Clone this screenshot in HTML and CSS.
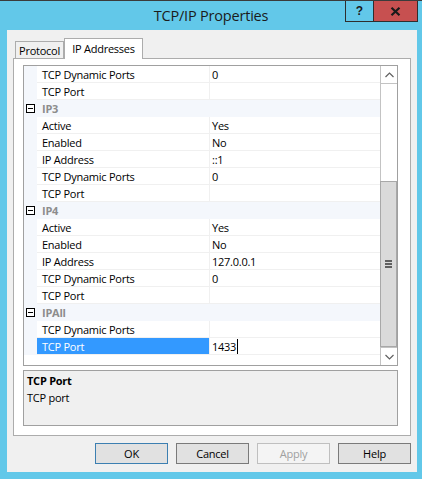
FILE: index.html
```html
<!DOCTYPE html>
<html>
<head>
<meta charset="utf-8">
<link rel="stylesheet" href="styles.css">
</head>
<body>
<div class="window">
  <div class="titlebar">
    <div></div>
    <div class="title">TCP/IP Properties</div>
    <div class="controls">
      <div class="ctl ctl-help">?</div>
      <div class="ctl ctl-close">
        <svg width="11" height="9" viewBox="0 0 11 9"><path d="M1.5 0.8 L9.5 8.2 M9.5 0.8 L1.5 8.2" stroke="#1a1a1a" stroke-width="2.2" fill="none"/></svg>
      </div>
    </div>
  </div>
  <div class="client">
    <div class="tabs">
      <div class="tab inactive">Protocol</div>
      <div class="tab active">IP Addresses</div>
    </div>
    <div class="panel">
      <div class="grid">
        <div class="rows">
          <div class="row"><div class="gut"></div><div class="name">TCP Dynamic Ports</div><div class="val">0</div></div>
          <div class="row"><div class="gut"></div><div class="name">TCP Port</div><div class="val"></div></div>
          <div class="cat"><div class="gut minus"><svg width="9" height="9" viewBox="0 0 9 9"><rect x="0.5" y="0.5" width="8" height="8" fill="#fff" stroke="#000"/><path d="M2 4.5 H7" stroke="#000"/></svg></div><div class="catname">IP3</div></div>
          <div class="row"><div class="gut"></div><div class="name">Active</div><div class="val">Yes</div></div>
          <div class="row"><div class="gut"></div><div class="name">Enabled</div><div class="val">No</div></div>
          <div class="row"><div class="gut"></div><div class="name">IP Address</div><div class="val">::1</div></div>
          <div class="row"><div class="gut"></div><div class="name">TCP Dynamic Ports</div><div class="val">0</div></div>
          <div class="row"><div class="gut"></div><div class="name">TCP Port</div><div class="val"></div></div>
          <div class="cat"><div class="gut minus"><svg width="9" height="9" viewBox="0 0 9 9"><rect x="0.5" y="0.5" width="8" height="8" fill="#fff" stroke="#000"/><path d="M2 4.5 H7" stroke="#000"/></svg></div><div class="catname">IP4</div></div>
          <div class="row"><div class="gut"></div><div class="name">Active</div><div class="val">Yes</div></div>
          <div class="row"><div class="gut"></div><div class="name">Enabled</div><div class="val">No</div></div>
          <div class="row"><div class="gut"></div><div class="name">IP Address</div><div class="val">127.0.0.1</div></div>
          <div class="row"><div class="gut"></div><div class="name">TCP Dynamic Ports</div><div class="val">0</div></div>
          <div class="row"><div class="gut"></div><div class="name">TCP Port</div><div class="val"></div></div>
          <div class="cat"><div class="gut minus"><svg width="9" height="9" viewBox="0 0 9 9"><rect x="0.5" y="0.5" width="8" height="8" fill="#fff" stroke="#000"/><path d="M2 4.5 H7" stroke="#000"/></svg></div><div class="catname">IPAll</div></div>
          <div class="row"><div class="gut"></div><div class="name">TCP Dynamic Ports</div><div class="val"></div></div>
          <div class="row"><div class="gut"></div><div class="name sel">TCP Port</div><div class="val"><span class="caret">1433</span></div></div>
        </div>
        <div class="scroll">
          <div class="sb-btn sb-up"><svg width="9" height="6" viewBox="0 0 9 6"><polyline points="0.5,5 4.5,1 8.5,5" fill="none" stroke="#606060" stroke-width="1.2"/></svg></div>
          <div class="sb-track"></div>
          <div class="sb-thumb"><div class="grip"><i></i><i></i><i></i></div></div>
          <div class="sb-btn sb-down"><svg width="9" height="6" viewBox="0 0 9 6"><polyline points="0.5,1 4.5,5 8.5,1" fill="none" stroke="#606060" stroke-width="1.2"/></svg></div>
        </div>
      </div>
      <div class="desc">
        <div class="desc-title">TCP Port</div>
        <div>TCP port</div>
      </div>
    </div>
    <div class="buttons">
      <div class="btn btn-default">OK</div>
      <div class="btn">Cancel</div>
      <div class="btn btn-disabled">Apply</div>
      <div class="btn">Help</div>
    </div>
  </div>
</div>
</body>
</html>
```
FILE: styles.css
```css
html, body {
  margin: 0;
  padding: 0;
  background: #62c8e9;
}
body {
  font-family: "Open Sans", "Noto Sans", sans-serif;
  font-size: 11px;
  letter-spacing: -0.25px;
  color: #000;
}
.window {
  width: 422px;
  height: 479px;
  box-sizing: border-box;
  border-top: 1px solid #3b3b3b;
  background: #62c8e9;
}
.titlebar {
  height: 29px;
  display: grid;
  grid-template-columns: 1fr auto 1fr;
  align-items: start;
}
.title {
  font-size: 14.5px;
  letter-spacing: -0.2px;
  color: #1b1b1b;
  line-height: 20px;
  padding-top: 5px;
  white-space: nowrap;
}
.controls {
  justify-self: end;
  display: flex;
  margin-right: 4px;
}
.ctl {
  height: 21px;
  box-sizing: border-box;
  border-left: 1px solid #2e2e2e;
  border-bottom: 1px solid #2e2e2e;
  display: flex;
  align-items: center;
  justify-content: center;
}
.ctl-help {
  width: 28px;
  font-weight: bold;
  font-size: 12px;
  letter-spacing: 0;
  color: #1a1a1a;
  font-family: "Liberation Sans", sans-serif;
}
.ctl-close {
  width: 45px;
  background: #c75050;
  border-right: 1px solid #2e2e2e;
}
.client {
  margin: 0 5px 0 7px;
  height: 442px;
  box-sizing: border-box;
  background: #f0f0f0;
  padding-top: 8px;
}
.tabs {
  display: flex;
  align-items: flex-end;
  height: 21px;
  margin: 0 0 -1px 8px;
  position: relative;
  z-index: 1;
}
.tab {
  box-sizing: border-box;
  border: 1px solid #acacac;
  border-bottom: none;
  display: flex;
  align-items: center;
  justify-content: center;
  white-space: nowrap;
}
.tab.inactive {
  width: 49px;
  height: 17px;
  margin-bottom: 1px;
  background: #f0f0f0;
  padding-top: 1px;
}
.tab.active {
  width: 79px;
  height: 21px;
  background: #fff;
  padding-bottom: 1px;
}
.panel {
  margin: 0 6px;
  height: 378px;
  box-sizing: border-box;
  border: 1px solid #acacac;
  background: #fff;
  padding: 6px 12px 9px 9px;
}
.grid {
  height: 301px;
  box-sizing: border-box;
  border: 1px solid #a0a0a0;
  display: flex;
}
.rows {
  flex: 1;
  background: #fff;
}
.row {
  display: grid;
  grid-template-columns: 13px 173px 1fr;
  height: 17px;
}
.gut {
  background: #f4f7fc;
}
.name, .val {
  box-sizing: border-box;
  border-bottom: 1px solid #f0f0f0;
  line-height: 17px;
  white-space: nowrap;
  overflow: hidden;
}
.name {
  border-right: 1px solid #f0f0f0;
  padding-left: 5px;
}
.name.sel {
  background: #3399ff;
  color: #fff;
}
.val {
  padding-left: 2px;
}
.caret {
  border-right: 1px solid #000;
  padding-right: 1px;
}
.cat {
  display: grid;
  grid-template-columns: 13px 1fr;
  height: 17px;
  background: #f4f7fc;
}
.minus {
  display: flex;
  align-items: center;
  padding-left: 2px;
}
.minus svg {
  display: block;
}
.catname {
  font-weight: bold;
  color: #8d8d8d;
  padding-left: 5px;
  line-height: 17px;
}
.scroll {
  width: 17px;
  box-sizing: border-box;
  border-left: 1px solid #c3c3c3;
  display: flex;
  flex-direction: column;
  background: #fff;
}
.sb-btn {
  height: 17px;
  display: flex;
  align-items: center;
  justify-content: center;
  flex: none;
}
.sb-up {
  border-bottom: 1px solid #c3c3c3;
}
.sb-down {
  border-top: 1px solid #c3c3c3;
}
.sb-btn svg {
  display: block;
}
.sb-track {
  flex: 1;
}
.sb-thumb {
  height: 166px;
  flex: none;
  box-sizing: border-box;
  background: #dadada;
  border: 1px solid #a8a8a8;
  margin-left: -1px;
  display: flex;
  align-items: center;
  justify-content: center;
}
.grip {
  display: flex;
  flex-direction: column;
  gap: 1px;
  width: 7px;
}
.grip i {
  display: block;
  height: 2px;
  background: #606060;
}
.desc {
  margin-top: 4px;
  height: 56px;
  box-sizing: border-box;
  border: 1px solid #a0a0a0;
  background: #f0f0f0;
  padding: 1px 3px;
  line-height: 17px;
}
.desc-title {
  font-weight: bold;
}
.buttons {
  display: flex;
  justify-content: flex-end;
  gap: 8px;
  margin: 7px 6px 0 0;
}
.btn {
  width: 73px;
  height: 21px;
  box-sizing: border-box;
  border: 1px solid #7a7a7a;
  background: #e1e1e1;
  display: flex;
  align-items: center;
  justify-content: center;
}
.btn-default {
  border-color: #3c7fb1;
}
.btn-disabled {
  border-color: #bfbfbf;
  background: #f4f4f4;
  color: #a0a0a0;
}
```
